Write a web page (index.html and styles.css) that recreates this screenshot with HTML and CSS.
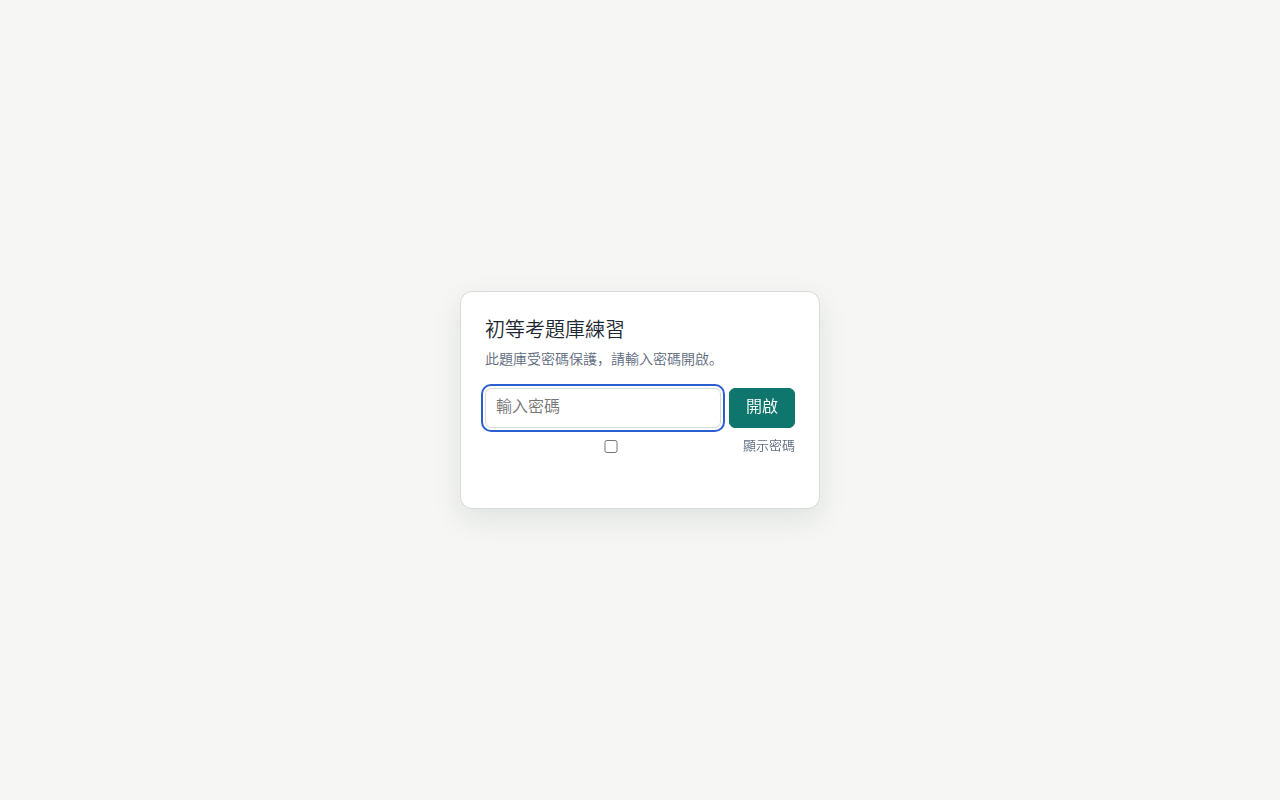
FILE: index.html
```html
<!DOCTYPE html>
<html lang="zh">
<head>
    <meta charset="UTF-8">
    <meta name="viewport" content="width=device-width, initial-scale=1.0">
    <title>初等考題庫練習</title>
    <link rel="stylesheet" href="styles.css">
</head>
<body>

    <main class="gate">
        <form id="gate-form" class="gate-card">
            <h1>初等考題庫練習</h1>
            <p class="hint">此題庫受密碼保護，請輸入密碼開啟。</p>

            <!-- Password field and submit -->
            <div class="gate-row">
                <input type="password" id="password" placeholder="輸入密碼" aria-label="密碼" autocomplete="current-password" autofocus>
                <button type="submit">開啟</button>
            </div>

            <label class="show-row" for="show-password">
                <input type="checkbox" id="show-password">
                顯示密碼
            </label>

            <p id="gate-error" class="error" role="alert"></p>
        </form>
    </main>

    <script>
        const gateForm = document.getElementById('gate-form');
        const password = document.getElementById('password');
        const showPassword = document.getElementById('show-password');
        const gateError = document.getElementById('gate-error');

        password.focus();

        showPassword.addEventListener('change', function () {
            password.type = showPassword.checked ? 'text' : 'password';
        });

        gateForm.addEventListener('submit', function (e) {
            e.preventDefault();
            gateError.innerText = password.value ? '' : '請輸入密碼';
        });
    </script>

</body>
</html>
```
FILE: styles.css
```css
* {
    box-sizing: border-box;
}

body {
    margin: 0;
    background-color: #f6f6f4;
    color: #1f2933;
    font-family: "Liberation Sans", "Noto Sans CJK SC", sans-serif;
    font-size: 16px;
    font-weight: 350;
    line-height: 24px;
}

.gate {
    display: grid;
    place-items: center;
    min-height: 100vh;
    padding: 20px;
}

.gate-card {
    width: 100%;
    max-width: 360px;
    padding: 24px;
    background-color: #ffffff;
    border: 1px solid #d6dbd9;
    border-radius: 12px;
    box-shadow: 0 10px 28px rgba(15, 70, 50, 0.1);
}

h1 {
    margin: 0 0 4px;
    font-size: 20px;
    font-weight: 350;
    line-height: 28px;
}

.hint {
    margin: 0 0 18px;
    color: #5f6b80;
    font-size: 14px;
    line-height: 22px;
}

.gate-row {
    display: flex;
    gap: 8px;
}

input,
button {
    font: inherit;
}

.gate-row input {
    flex: 1;
    min-width: 0;
    height: 40px;
    padding: 7px 10px 9px;
    border: 1px solid #d6dbd9;
    border-radius: 6px;
}

.gate-row input:focus {
    outline: 2px solid #2b5fd0;
    outline-offset: 2px;
}

.gate-row button {
    height: 40px;
    padding: 0 16px 2px;
    background-color: #0f766e;
    color: #ffffff;
    border: 1px solid #0f766e;
    border-radius: 6px;
    cursor: pointer;
}

.show-row {
    display: flex;
    align-items: center;
    gap: 6px;
    margin-top: 8px;
    color: #5f6b80;
    font-size: 13px;
    line-height: 20px;
}

.show-row input {
    flex: 1;
    height: 13px;
    margin: 0;
}

.error {
    min-height: 20px;
    margin: 8px 0 0;
    color: #b91c1c;
    font-size: 13px;
    line-height: 20px;
}
```
